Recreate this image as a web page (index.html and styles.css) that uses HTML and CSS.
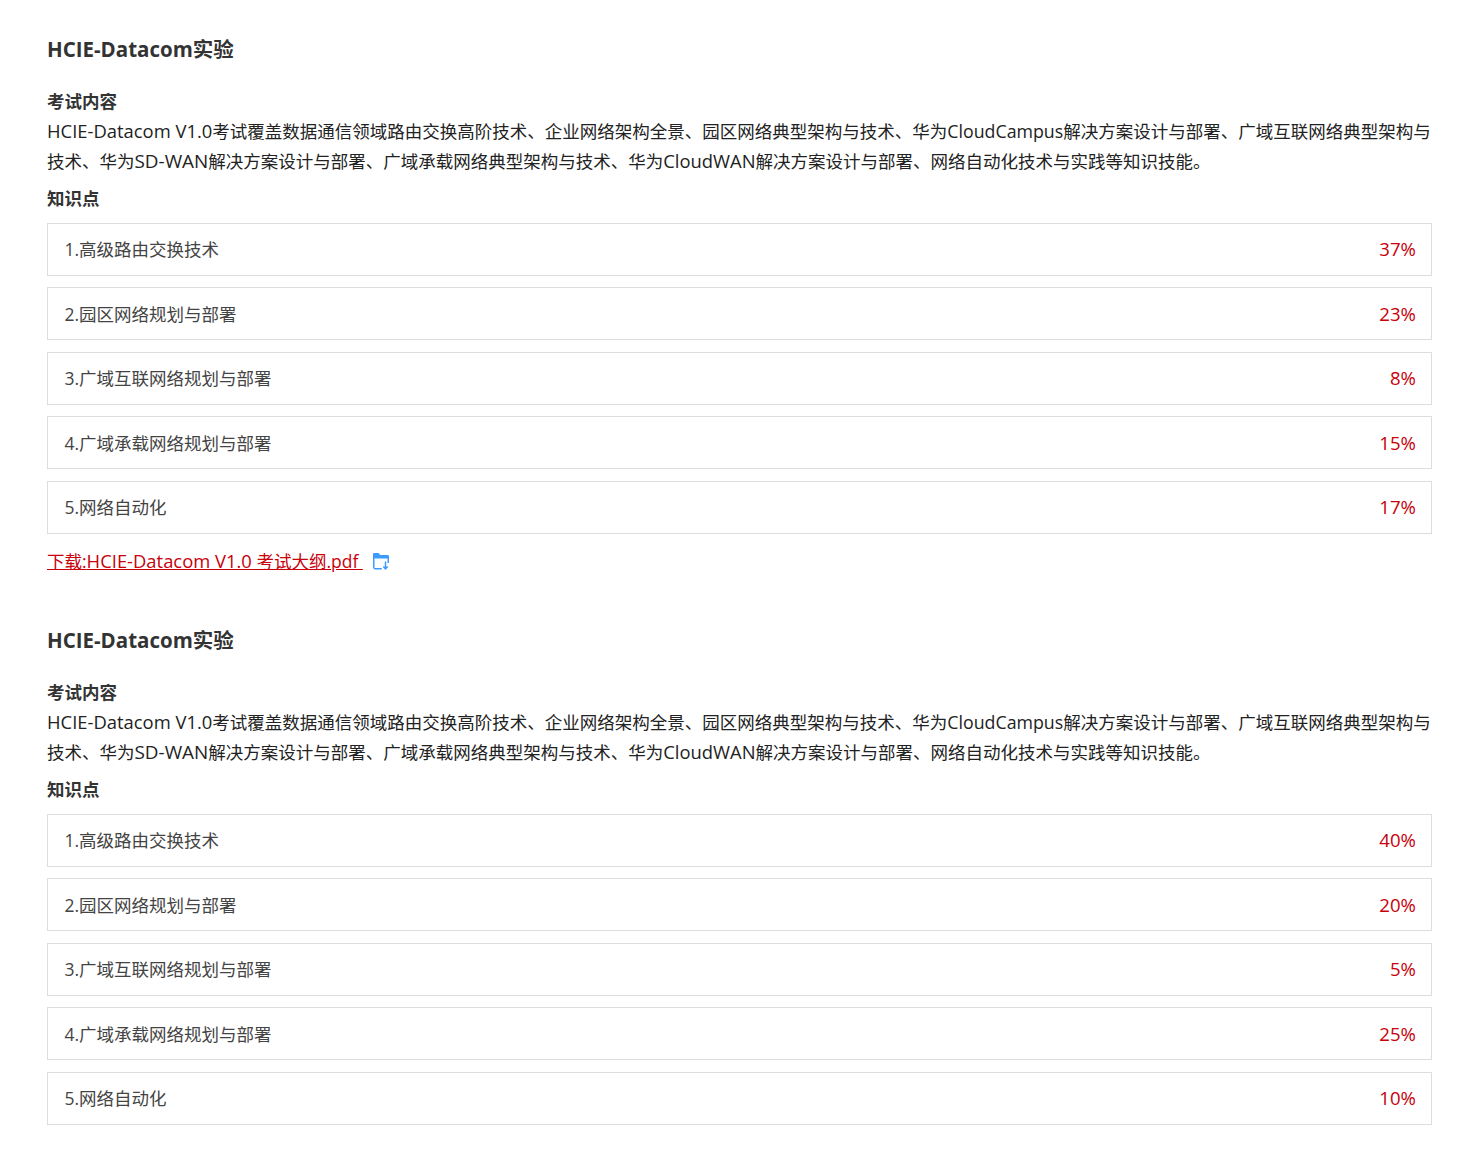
FILE: index.html
```html
<!DOCTYPE html>
<html lang="zh-CN">
<head>
<meta charset="utf-8">
<title>HCIE-Datacom实验</title>
<link rel="stylesheet" href="styles.css">
</head>
<body>
<main class="page">
<section class="exam">
<h2 class="exam-title">HCIE-Datacom实验</h2>
<h3 class="sub">考试内容</h3>
<p class="desc"><span class="lat-wide">HCIE-Datacom V1.0</span>考试覆盖数据通信领域路由交换高阶技术、企业网络架构全景、园区网络典型架构与技术、华为<span class="lat">CloudCampus</span>解决方案设计与部署、广域互联网络典型架构与技术、华为<span class="lat-caps">SD-WAN</span>解决方案设计与部署、广域承载网络典型架构与技术、华为<span class="lat-wide">CloudWAN</span>解决方案设计与部署、网络自动化技术与实践等知识技能。</p>
<h3 class="sub sub-points">知识点</h3>
<ul class="points">
<li class="point"><span>1.高级路由交换技术</span><span class="pct">37%</span></li>
<li class="point"><span>2.园区网络规划与部署</span><span class="pct">23%</span></li>
<li class="point"><span>3.广域互联网络规划与部署</span><span class="pct">8%</span></li>
<li class="point"><span>4.广域承载网络规划与部署</span><span class="pct">15%</span></li>
<li class="point"><span>5.网络自动化</span><span class="pct">17%</span></li>
</ul>
<p class="download"><a class="dl-link" href="#">下载:<span class="lat-wide">HCIE-Datacom V1.0</span> 考试大纲.pdf&nbsp;</a><svg class="dl-icon" viewBox="0 0 18 18" width="18" height="18" aria-hidden="true"><path d="M1 6.5V2.2C1 1.5 1.5 1 2.2 1h4.4l1.6 2h7.4c.8 0 1.4.6 1.4 1.4v2.1H1z" fill="#3d9bff"/><path d="M1.75 6v9.3c0 .8.5 1.4 1.3 1.4h6.7M16.25 6v5" fill="none" stroke="#3d9bff" stroke-width="1.5"/><path d="M13.5 9.5v7.2M11.3 14.4l2.2 2.4 2.2-2.4" fill="none" stroke="#3d9bff" stroke-width="1.5"/></svg></p>
</section>
<section class="exam">
<h2 class="exam-title">HCIE-Datacom实验</h2>
<h3 class="sub">考试内容</h3>
<p class="desc"><span class="lat-wide">HCIE-Datacom V1.0</span>考试覆盖数据通信领域路由交换高阶技术、企业网络架构全景、园区网络典型架构与技术、华为<span class="lat">CloudCampus</span>解决方案设计与部署、广域互联网络典型架构与技术、华为<span class="lat-caps">SD-WAN</span>解决方案设计与部署、广域承载网络典型架构与技术、华为<span class="lat-wide">CloudWAN</span>解决方案设计与部署、网络自动化技术与实践等知识技能。</p>
<h3 class="sub sub-points">知识点</h3>
<ul class="points">
<li class="point"><span>1.高级路由交换技术</span><span class="pct">40%</span></li>
<li class="point"><span>2.园区网络规划与部署</span><span class="pct">20%</span></li>
<li class="point"><span>3.广域互联网络规划与部署</span><span class="pct">5%</span></li>
<li class="point"><span>4.广域承载网络规划与部署</span><span class="pct">25%</span></li>
<li class="point"><span>5.网络自动化</span><span class="pct">10%</span></li>
</ul>
</section>
</main>
</body>
</html>
```
FILE: styles.css
```css
* { box-sizing: border-box; }
html, body { margin: 0; padding: 0; background: #fff; }
body {
  font-family: "Open Sans", "Noto Sans CJK SC", sans-serif;
  font-size: 17.5px;
  color: #333;
}
.page { padding: 34px 36px 30px 47px; }
.exam { margin-bottom: 49px; }
.exam:last-child { margin-bottom: 0; }
.exam-title {
  margin: 0 0 22px;
  font-size: 20.5px;
  line-height: 30px;
  font-weight: 700;
  color: #333;
}
.sub {
  margin: 0;
  font-size: 17.5px;
  line-height: 30px;
  font-weight: 700;
  color: #333;
}
.sub-points { margin-top: 7px; margin-bottom: 9.9px; }
.desc {
  margin: 0;
  font-size: 17.5px;
  line-height: 30px;
  color: #222;
}
.lat { font-size: 17.8px; }
.lat-wide { font-size: 18.4px; }
.lat-caps { font-size: 18.9px; }
.points { list-style: none; margin: 0; padding: 0; display: flex; flex-direction: column; gap: 11.5px; }
.point {
  display: flex;
  justify-content: space-between;
  align-items: center;
  height: 53px;
  padding: 0 15px 1.2px 16.5px;
  border: 1px solid #ddd;
  font-size: 17.5px;
  color: #444;
}
.pct { color: #c7000b; font-size: 18.6px; }
.download { margin: 12.1px 0 0; height: 30px; display: flex; align-items: center; }
.dl-link { color: #c7000b; text-decoration: underline; }
.dl-icon { margin-left: 9px; }
```
